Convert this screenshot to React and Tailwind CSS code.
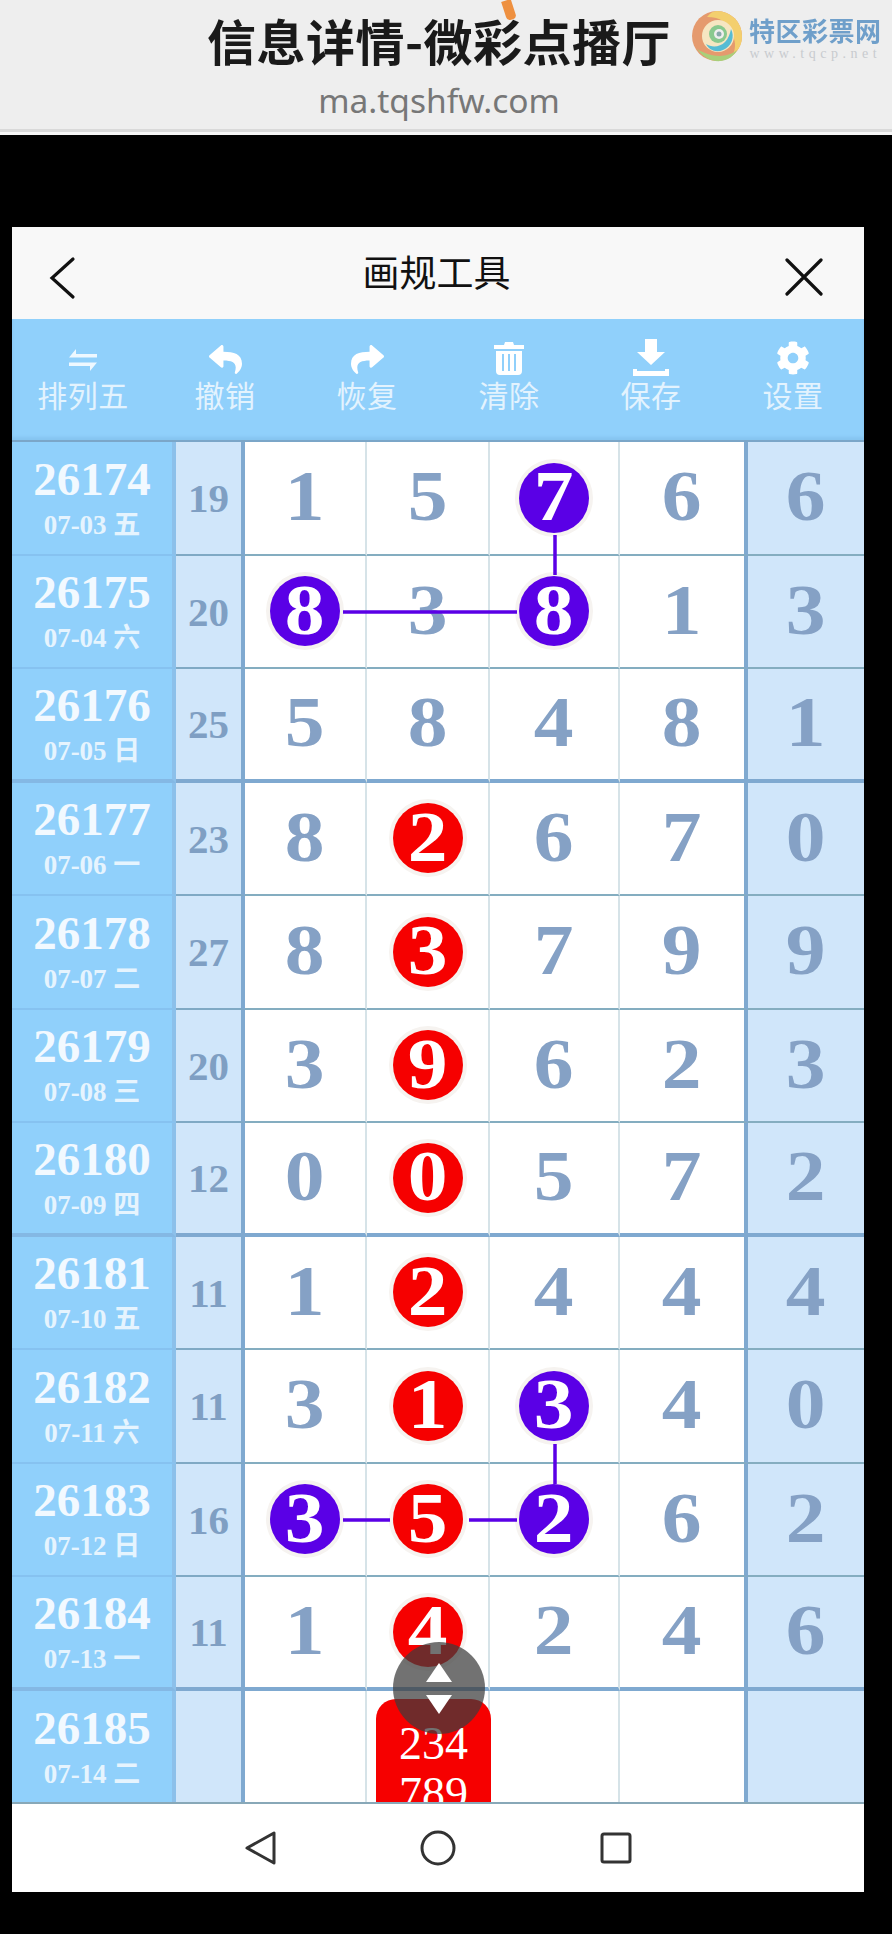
import React from "react";
import { FaReply, FaShare, FaCog } from "react-icons/fa";

const rows = [
  ["26174", "07-03 五", "19", ["1", "5", "7p", "6"], "6"],
  ["26175", "07-04 六", "20", ["8p", "3", "8p", "1"], "3"],
  ["26176", "07-05 日", "25", ["5", "8", "4", "8"], "1", true],
  ["26177", "07-06 一", "23", ["8", "2r", "6", "7"], "0"],
  ["26178", "07-07 二", "27", ["8", "3r", "7", "9"], "9"],
  ["26179", "07-08 三", "20", ["3", "9r", "6", "2"], "3"],
  ["26180", "07-09 四", "12", ["0", "0r", "5", "7"], "2", true],
  ["26181", "07-10 五", "11", ["1", "2r", "4", "4"], "4"],
  ["26182", "07-11 六", "11", ["3", "1r", "3p", "4"], "0"],
  ["26183", "07-12 日", "16", ["3p", "5r", "2p", "6"], "2"],
  ["26184", "07-13 一", "11", ["1", "4r", "2", "4"], "6", true],
];

const serif = "[font-family:'Liberation_Serif','Noto_Sans_CJK_SC',serif]";
const cellW = ["w-[122px]", "w-[123px]", "w-[130px]", "w-[128px] border-r-4 border-r-[#7fa9d0]"];

function Ball({ v }) {
  const d = v[0];
  const t = v[1];
  if (!t) return <span className="mb-[2px] inline-block scale-x-[1.12] text-[71px] leading-none font-bold text-[#85a1c5]">{d}</span>;
  return (
    <span
      className={`flex h-[70px] w-[70px] items-center justify-center rounded-full shadow-[0_0_0_4px_#f6f3f0] ${
        t === "p" ? "bg-[#5a00e6]" : "bg-[#f60000]"
      }`}
    >
      <span className="mb-[2px] inline-block scale-x-[1.12] text-[71px] leading-none font-bold text-white">{d}</span>
    </span>
  );
}

function Row({ r }) {
  const [no, date, sum, cells, last, thick] = r;
  const bb = thick ? "border-b-[4px]" : "border-b-2";
  return (
    <div className={`flex h-[113.5px] ${serif}`}>
      <div className={`flex w-[164px] flex-col items-center justify-center border-r-4 border-r-[#8cc0ea] bg-[#90d0fb] ${bb} ${thick ? "border-b-[#84b8e4]" : "border-b-[#86c2f0]"}`}>
        <span className="text-[47px] leading-[50px] font-bold text-[#f2f9ff]">{no}</span>
        <span className="mt-[4px] text-[27px] leading-[34px] font-bold text-[#e6f4fe]">{date}</span>
      </div>
      <div className={`flex w-[69px] items-center justify-center border-r-4 border-r-[#7fa9d0] bg-[#d0e6fa] pt-[2px] text-[41px] font-bold text-[#7f9fc3] ${bb} ${thick ? "border-b-[#7fa9d0]" : "border-b-[#7fa9c4]"}`}>
        {sum}
      </div>
      {cells.map((c, i) => (
        <div
          key={i}
          className={`flex items-center justify-center bg-white ${cellW[i]} ${bb} ${i < 3 ? "border-r-2 border-r-[#d6e3e8]" : ""} ${thick ? "border-b-[#7fa9d0]" : "border-b-[#84adc0]"}`}
        >
          <Ball v={c} />
        </div>
      ))}
      <div className={`flex w-[116px] items-center justify-center bg-[#d0e6fa] ${bb} ${thick ? "border-b-[#7fa9d0]" : "border-b-[#84adc0]"}`}>
        <span className="mb-[2px] inline-block scale-x-[1.12] text-[71px] leading-none font-bold text-[#85a1c5]">{last}</span>
      </div>
    </div>
  );
}

function ToolItem({ icon, label }) {
  return (
    <div className="flex w-[142px] flex-col items-center">
      <div className="flex h-[36px] items-center justify-center text-white">{icon}</div>
      <span className="text-[30px] leading-[36px] tracking-[0.5px] text-[#e3f3fe]">{label}</span>
    </div>
  );
}

function Logo() {
  return (
    <svg width="52" height="54" viewBox="0 0 52 54" className="blur-[0.5px]">
      <circle cx="26" cy="27" r="25" fill="#e59a6e" />
      <path d="M26 2a25 25 0 0 1 25 25c0 8-3 14-9 18 3-6 3-14-2-22C36 14 30 8 16 8c3-4 6-6 10-6z" fill="#f3cf6e" />
      <path d="M6 40c6 8 14 13 24 12 7-1 13-5 16-11-8 7-24 9-40-1z" fill="#a9cf7a" />
      <circle cx="27" cy="27" r="16" fill="#f6e6c2" />
      <path d="M40 20a15 15 0 0 1-8 21c-7 3-14 0-17-6 6 4 14 3 19-2 3-3 5-8 6-13z" fill="#57bcd4" />
      <circle cx="27" cy="25" r="9" fill="#89c98e" />
      <circle cx="28" cy="25" r="5" fill="#eee" />
      <circle cx="28" cy="25" r="2.5" fill="#8aa" />
    </svg>
  );
}

export default function App() {
  return (
    <div className="relative flex h-[1934px] w-[892px] flex-col overflow-hidden bg-black [font-family:'Noto_Sans_CJK_SC','Noto_Sans',sans-serif]">
      <div className="relative flex h-[129px] flex-col items-center bg-[#eeeeee] pr-[14px]">
        <div className="absolute top-0 left-[504px] h-[20px] w-[10px] rotate-[-18deg] rounded-b-[4px] bg-[#ee9040]" />
        <h1 className="mt-[11px] text-[49px] leading-[58px] font-bold tracking-[0.5px] whitespace-nowrap text-[#1a1a1a]">信息详情-微彩点播厅</h1>
        <p className="mt-[11px] text-[33.5px] leading-[40px] text-[#777777] [font-family:'Noto_Sans',sans-serif]">ma.tqshfw.com</p>
        <div className="absolute top-[9px] left-[691px] flex items-start gap-[6px]">
          <Logo />
          <div className="flex flex-col items-center pt-[6px]">
            <span className="text-[26px] leading-[30px] font-bold tracking-[0.5px] whitespace-nowrap text-[#6f9fca] blur-[0.5px]">特区彩票网</span>
            <span className="mt-[1px] text-[14px] leading-[16px] tracking-[4.5px] whitespace-nowrap text-[#c8cbce] [font-family:'Liberation_Serif',serif]">www.tqcp.net</span>
          </div>
        </div>
      </div>
      <div className="h-[3px] bg-[#d9d9d9]" />
      <div className="h-[3px] bg-[#f6f6f6]" />
      <div className="h-[92px]" />

      <div className="mx-[12px] flex w-[852px] flex-col">
        <div className="flex h-[92px] items-center justify-between bg-[#f8f8f8] pr-[41px] pl-[36px]">
          <svg width="30" height="44" viewBox="0 0 30 44" fill="none" stroke="#111" strokeWidth="3.2" strokeLinecap="round" className="mt-[10px]">
            <path d="M25 3 L4 22 L25 41" />
          </svg>
          <span className="ml-[10px] pb-[2px] text-[37px] text-[#111]">画规工具</span>
          <svg width="38" height="38" viewBox="0 0 38 38" fill="none" stroke="#111" strokeWidth="3.2" strokeLinecap="round" className="mt-[8px]">
            <path d="M2 2 L36 36 M36 2 L2 36" />
          </svg>
        </div>

        <div className="flex h-[121px] items-start bg-[#90d0fb] pt-[21px] shadow-[inset_0_-3px_3px_#86c4f0]">
          <ToolItem
            label="排列五"
            icon={
              <svg width="30" height="24" viewBox="0 0 30 24" fill="#eef8ff" className="mt-[3px]">
                <path d="M8 1 L8 6 L29 6 L29 9.5 L1 9.5 Z" />
                <path d="M22 23 L22 18 L1 18 L1 14.5 L29 14.5 Z" />
              </svg>
            }
          />
          <ToolItem label="撤销" icon={<FaReply size={33} className="mt-[2px]" />} />
          <ToolItem label="恢复" icon={<FaShare size={33} className="mt-[2px]" />} />
          <ToolItem
            label="清除"
            icon={
              <svg width="32" height="34" viewBox="0 0 32 34" fill="#fff">
                <path d="M11 4 L12 1 H20 L21 4 H31 V8 H1 V4 Z" />
                <path fillRule="evenodd" d="M3 10 H29 V30 Q29 34 25 34 H7 Q3 34 3 30 Z M9 13 V30 H11 V13 Z M15 13 V30 H17 V13 Z M21 13 V30 H23 V13 Z" />
              </svg>
            }
          />
          <ToolItem
            label="保存"
            icon={
              <svg width="38" height="38" viewBox="0 0 38 38" fill="#fff">
                <path d="M13 0 H25 V13 H33 L19 26 L5 13 H13 Z" />
                <path d="M1 30 H5 V32 H33 V30 H37 V37 H1 Z" />
              </svg>
            }
          />
          <ToolItem label="设置" icon={<FaCog size={34} />} />
        </div>

        <div className="relative h-[1364px] overflow-hidden border-t-2 border-t-[#7ba6c8]">
          {rows.map((r) => (
            <Row key={r[0]} r={r} />
          ))}
          <div className={`flex h-[113.5px] ${serif}`}>
            <div className="flex w-[164px] flex-col items-center justify-center border-r-4 border-r-[#8cc0ea] bg-[#90d0fb]">
              <span className="text-[47px] leading-[50px] font-bold text-[#f2f9ff]">26185</span>
              <span className="mt-[4px] text-[27px] leading-[34px] font-bold text-[#e6f4fe]">07-14 二</span>
            </div>
            <div className="w-[69px] border-r-4 border-r-[#7fa9d0] bg-[#d0e6fa]" />
            <div className="w-[122px] border-r-2 border-r-[#d6e3e8] bg-white" />
            <div className="flex w-[123px] border-r-2 border-r-[#d6e3e8] bg-white pt-[8px] pl-[9px]">
              <div className="relative h-[120px] w-[115px] shrink-0 rounded-t-[20px] bg-[#f60000] pt-[20px] text-center text-[46px] leading-[50px] text-white">
                234
                <br />
                789
              </div>
            </div>
            <div className="w-[130px] border-r-2 border-r-[#d6e3e8] bg-white" />
            <div className="w-[128px] border-r-4 border-r-[#7fa9d0] bg-white" />
            <div className="w-[116px] bg-[#d0e6fa]" />
          </div>
          <div className="absolute right-0 bottom-0 left-0 h-[2px] bg-[#88a8b8]" />

          <svg className="pointer-events-none absolute top-0 left-0" width="852" height="1362" fill="none" stroke="#5a00e6" strokeWidth="3.5">
            <path d="M543 93 V133" />
            <path d="M331 170 H505" />
            <path d="M543 1002 V1042" />
            <path d="M331 1078 H378 M457 1078 H505" />
          </svg>

          <div className="absolute top-[1200px] left-[381px] flex h-[92px] w-[92px] flex-col items-center justify-center gap-[13px] rounded-full bg-[rgba(60,60,60,0.72)]">
            <span className="h-0 w-0 border-x-[13px] border-b-[19px] border-x-transparent border-b-white" />
            <span className="h-0 w-0 border-x-[13px] border-t-[19px] border-x-transparent border-t-white" />
          </div>
        </div>

        <div className="flex h-[88px] items-center bg-white pl-[232px]">
          <svg width="32" height="36" viewBox="0 0 32 36" fill="none" stroke="#333" strokeWidth="3" strokeLinejoin="round">
            <path d="M30 3 V33 L3 18 Z" />
          </svg>
          <svg width="36" height="36" viewBox="0 0 36 36" fill="none" stroke="#333" strokeWidth="3" className="ml-[144px]">
            <circle cx="18" cy="18" r="16" />
          </svg>
          <svg width="32" height="32" viewBox="0 0 32 32" fill="none" stroke="#333" strokeWidth="3" strokeLinejoin="round" className="ml-[144px]">
            <rect x="2" y="2" width="28" height="28" rx="2" />
          </svg>
        </div>
      </div>
    </div>
  );
}
